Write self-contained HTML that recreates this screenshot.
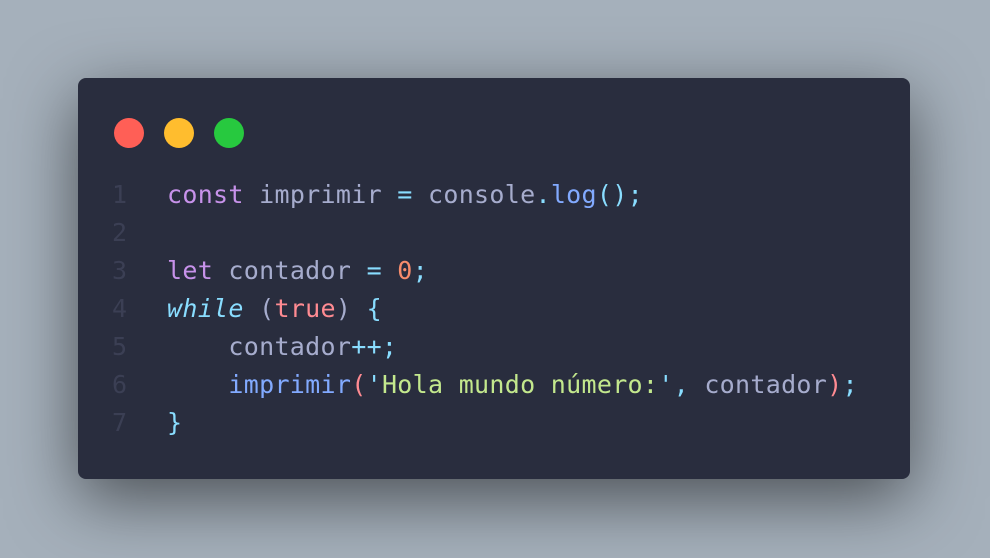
<!DOCTYPE html>
<html><head><meta charset="utf-8"><style>
html,body{margin:0;padding:0;width:990px;height:558px;overflow:hidden;background:#a5b0bb;}
.card{position:absolute;left:78px;top:78px;width:832px;height:401px;background:#292d3e;border-radius:8px;box-shadow:0 20px 68px rgba(0,0,0,0.55);}
.dot{position:absolute;top:40px;width:30px;height:30px;border-radius:50%;}
.code{position:absolute;left:0;top:98px;font-family:"DejaVu Sans Mono","Liberation Mono",monospace;font-size:25px;letter-spacing:0.3px;line-height:38px;white-space:pre;color:#a6accd;}
.ln{display:inline-block;width:89px;text-align:left;padding-left:34px;box-sizing:border-box;color:#3b3f54;}
.k{color:#c792ea}.c{color:#89ddff}.n{color:#f78c6c}.f{color:#82aaff}.s{color:#c3e88d}.t{color:#ff8b92}
.i{color:#89ddff;font-style:italic}
</style></head><body>
<div class="card">
<div class="dot" style="left:36px;background:#ff5f56"></div>
<div class="dot" style="left:86px;background:#ffbd2e"></div>
<div class="dot" style="left:136px;background:#27c93f"></div>
<div class="code"><span class="ln">1</span><span class="k">const</span> imprimir <span class="c">=</span> console<span class="c">.</span><span class="f">log</span><span class="c">();</span>
<span class="ln">2</span>
<span class="ln">3</span><span class="k">let</span> contador <span class="c">=</span> <span class="n">0</span><span class="c">;</span>
<span class="ln">4</span><span class="i">while</span> (<span class="t">true</span>) <span class="c">{</span>
<span class="ln">5</span>    contador<span class="c">++;</span>
<span class="ln">6</span>    <span class="f">imprimir</span><span class="t">(</span><span class="c">'</span><span class="s">Hola mundo número:</span><span class="c">',</span> contador<span class="t">)</span><span class="c">;</span>
<span class="ln">7</span><span class="c">}</span></div>
</div>
</body></html>
